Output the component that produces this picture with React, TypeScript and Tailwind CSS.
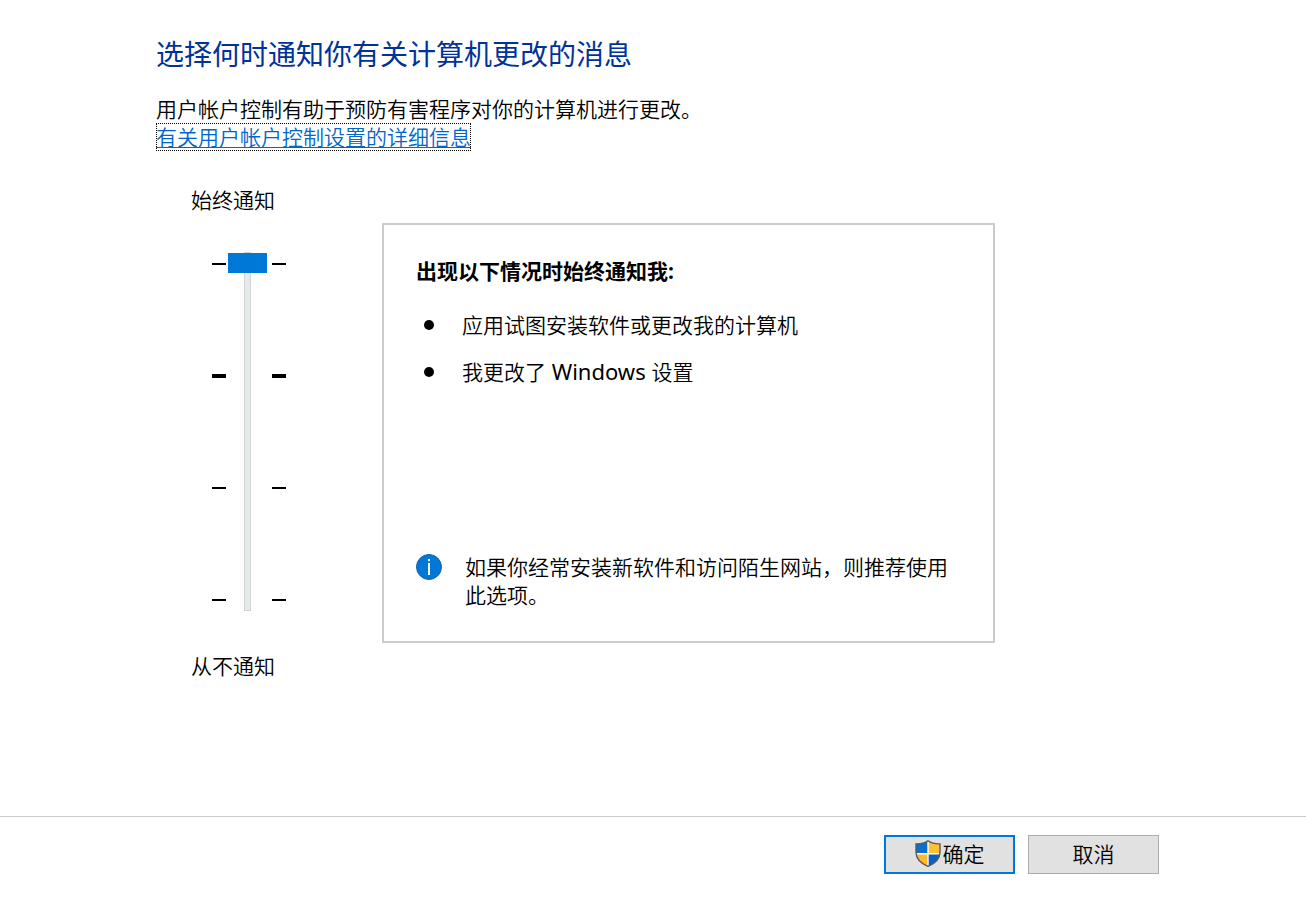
import React, { useState } from "react";

const levels = ["从不通知", "仅当应用尝试更改时通知(不降低亮度)", "仅当应用尝试更改时通知", "始终通知"];

// The second mark is the default level, so it is drawn heavier
const ticks = ["h-[2px]", "h-[4px]", "h-[2px]", "h-[2px]"];

function Ticks() {
  return (
    <div aria-hidden="true" className="flex h-[340px] flex-col justify-between">
      {ticks.map((height, idx) => (
        <div key={idx} className="flex h-1 items-center">
          <div className={`w-full bg-black ${height}`} />
        </div>
      ))}
    </div>
  );
}

function Reason({ children }: { children: React.ReactNode }) {
  return (
    <li className="flex items-center gap-7 pl-2">
      <span className="h-[10px] w-[10px] shrink-0 rounded-full bg-black" />
      <span>{children}</span>
    </li>
  );
}

function InfoIcon() {
  return (
    <svg viewBox="0 0 26 26" className="mt-px h-[26px] w-[26px] shrink-0" aria-hidden="true">
      <circle cx="13" cy="13" r="12.5" fill="#0078d7" stroke="#1a5fa8" strokeWidth="1" />
      <rect x="12" y="5" width="2" height="2.2" fill="#fff" />
      <rect x="12" y="9" width="2" height="12" fill="#fff" />
    </svg>
  );
}

function ShieldIcon() {
  const outline = "M13 .8C10.5 2.6 6 4 1 3.9V12C1 18.5 6 23.5 13 26.4C20 23.5 25 18.5 25 12V3.9C20 4 15.5 2.6 13 .8Z";
  return (
    <svg viewBox="0 0 26 27" className="h-[27px] w-[26px] shrink-0" aria-hidden="true">
      <defs>
        <clipPath id="shield">
          <path d={outline} />
        </clipPath>
      </defs>
      <g clipPath="url(#shield)">
        <rect width="26" height="27" fill="#fff" />
        <rect width="12.3" height="13" fill="#0b6fd0" />
        <rect x="13.7" width="12.3" height="13" fill="#ffc035" />
        <rect y="14.5" width="12.3" height="12.5" fill="#ffb92e" />
        <rect x="13.7" y="14.5" width="12.3" height="12.5" fill="#0a5fc2" />
      </g>
      <path d={outline} fill="none" stroke="#5b5b5b" strokeWidth="1.4" />
    </svg>
  );
}

export default function App() {
  const [level, setLevel] = useState(3);

  return (
    <div className="flex min-h-screen flex-col bg-white font-['Noto_Sans','Noto_Sans_CJK_SC',sans-serif] text-[21px] leading-7 font-[350] text-black" lang="zh-CN">
      <main className="flex-1 pt-9 pr-[147px] pb-8 pl-[156px]">
        <h1 className="text-[28px] leading-9 font-normal text-[#003399]">选择何时通知你有关计算机更改的消息</h1>
        <p className="mt-[23px]">用户帐户控制有助于预防有害程序对你的计算机进行更改。</p>
        <a
          href="#details"
          className="inline-block text-[#0066cc] underline decoration-1 underline-offset-2 outline-1 -outline-offset-1 outline-dotted outline-black"
        >
          有关用户帐户控制设置的详细信息
        </a>

        <div className="mt-[35px] flex items-start">
          {/* Notification level */}
          <div className="w-[226px] shrink-0 pl-[35px]">
            <label htmlFor="level" className="block">始终通知</label>
            <div className="mt-[38px] ml-[21px] grid grid-cols-[14px_46px_14px] items-center">
              <Ticks />
              <input
                id="level"
                type="range"
                min={0}
                max={3}
                step={1}
                value={level}
                aria-valuetext={levels[level]}
                onChange={(e) => setLevel(Number(e.target.value))}
                className="ml-[2px] h-[359px] w-[39px] appearance-none bg-transparent outline-none [direction:rtl] [writing-mode:vertical-lr] [&::-webkit-slider-runnable-track]:h-full [&::-webkit-slider-runnable-track]:w-[7px] [&::-webkit-slider-runnable-track]:border [&::-webkit-slider-runnable-track]:border-[#d3d5d5] [&::-webkit-slider-runnable-track]:bg-[#e7eaea] [&::-webkit-slider-thumb]:-ml-[17px] [&::-webkit-slider-thumb]:h-5 [&::-webkit-slider-thumb]:w-[39px] [&::-webkit-slider-thumb]:appearance-none [&::-webkit-slider-thumb]:bg-[#0078d7]"
              />
              <Ticks />
            </div>
            <div className="mt-[41px]">从不通知</div>
          </div>

          {/* What the chosen level means */}
          <section className="mt-[37px] flex min-h-[420px] max-w-[613px] flex-1 flex-col border-2 border-[#cccccc] px-8 pt-8 pb-8">
            <h2 className="font-bold">出现以下情况时始终通知我:</h2>
            <ul className="mt-[26px] space-y-[18px]">
              <Reason>应用试图安装软件或更改我的计算机</Reason>
              <Reason>
                我更改了<span className="text-[22px] font-normal"> Windows </span>设置
              </Reason>
            </ul>
            <div className="mt-auto flex items-start gap-[23px] pt-8">
              <InfoIcon />
              <p>如果你经常安装新软件和访问陌生网站，则推荐使用此选项。</p>
            </div>
          </section>
        </div>
      </main>

      <footer className="flex justify-end gap-[13px] border-t border-[#cccccc] pt-[18px] pr-[147px] pb-[42px]">
        <button type="button" className="flex h-[39px] w-[131px] items-center justify-center gap-[2px] border-2 border-[#0078d7] bg-[#e1e1e1] pb-[2px]">
          <ShieldIcon />
          确定
        </button>
        <button type="button" className="h-[39px] w-[131px] border border-[#adadad] bg-[#e1e1e1] pb-[2px]">
          取消
        </button>
      </footer>
    </div>
  );
}
